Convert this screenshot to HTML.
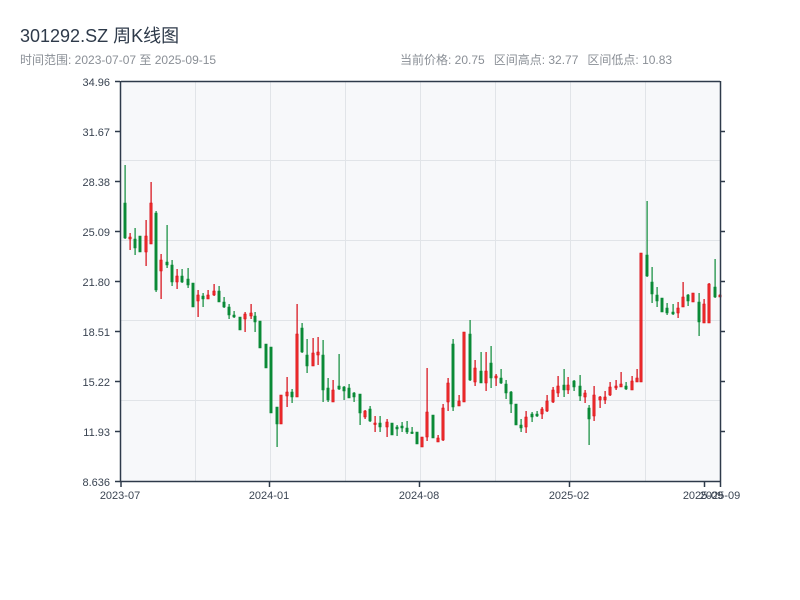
<!DOCTYPE html>
<html><head><meta charset="utf-8"><style>
body{margin:0;width:800px;height:600px;background:#fff;font-family:"Liberation Sans","Noto Sans CJK SC",sans-serif;overflow:hidden;position:relative}
.t{position:absolute;left:20px;top:22px;font-size:18px;color:#2e3a4a}
.s{position:absolute;top:51px;font-size:12px;color:#8a8f96;white-space:nowrap}
.s span{margin-left:9px}
svg{position:absolute;left:0;top:0}
</style></head><body>
<div class="t">301292.SZ 周K线图</div>
<div class="s" style="left:20px">时间范围: 2023-07-07 至 2025-09-15</div>
<div class="s" style="left:400px">当前价格: 20.75<span>区间高点: 32.77</span><span>区间低点: 10.83</span></div>
<svg width="800" height="600" id="c" xmlns="http://www.w3.org/2000/svg" font-family="Liberation Sans, sans-serif" font-size="11" fill="#3a4452">
<rect x="121" y="81" width="599" height="400" fill="#f7f8fa"/>
<g stroke="#e1e4e8" stroke-width="1">
<path d="M195.5 81V481M270.5 81V481M345.5 81V481M420.5 81V481M495.5 81V481M570.5 81V481M645.5 81V481"/>
<path d="M121 160.5H720M121 240.5H720M121 320.5H720M121 400.5H720"/>
</g>
<g id="k"></g>
<g stroke="#2e3a4a" stroke-width="1.5" fill="none">
<path d="M120.5 81V481.5H721M121 81.5H720M720.5 81V481"/>
<path d="M115 81.5H120M115 131.5H120M115 181.5H120M115 231.5H120M115 281.5H120M115 331.5H120M115 381.5H120M115 431.5H120M115 481.5H120"/>
<path d="M720 131.5H725M720 181.5H725M720 231.5H725M720 281.5H725M720 331.5H725M720 381.5H725M720 431.5H725"/>
<path d="M121 481V487M269.5 481V487M419.5 481V487M569.5 481V487M704.5 481V487M720.5 481V487"/>
</g>
<g text-anchor="end">
<text x="110" y="86">34.96</text><text x="110" y="136">31.67</text><text x="110" y="186">28.38</text><text x="110" y="236">25.09</text><text x="110" y="286">21.80</text><text x="110" y="336">18.51</text><text x="110" y="386">15.22</text><text x="110" y="436">11.93</text><text x="110" y="486">8.636</text>
</g>
<g text-anchor="middle">
<text x="120" y="499">2023-07</text><text x="269" y="499">2024-01</text><text x="419" y="499">2024-08</text><text x="569" y="499">2025-02</text><text x="703" y="499">2025-09</text><text x="720" y="499">2025-09</text>
</g>
</svg>
<script>
var d=[
[125,165,239,203,238,'g'],[130,233,250,237,239,'r'],[135,228,255,239,248,'g'],[140,236,252,236,252,'g'],[146,220,266,236,252,'r'],[151,182,244,203,244,'r'],[156,211,292,213,290,'g'],[161,254,299,260,271,'r'],[167,225,268,262,265,'g'],[172,260,286,265,282,'g'],[177,269,289,276,282,'r'],[182,269,283,276,282,'g'],[188,268,288,279,285,'g'],[193,283,307,283,307,'g'],[198,290,317,295,301,'r'],[203,293,307,296,299,'g'],[208,290,299,295,299,'r'],[214,284,296,291,295,'r'],[219,286,302,291,302,'g'],[224,297,308,302,307,'g'],[229,304,319,307,315,'g'],[234,311,318,315,317,'g'],[240,317,330,317,330,'g'],[245,312,332,314,319,'r'],[251,304,319,313,316,'r'],[255,312,332,316,322,'g'],[260,321,348,321,348,'g'],[266,344,368,344,368,'g'],[271,347,413,347,413,'g'],[277,407,447,407,424,'g'],[281,395,424,395,424,'r'],[287,377,407,392,396,'r'],[292,389,403,392,397,'g'],[297,304,397,334,397,'r'],[302,323,353,328,352,'g'],[307,339,373,355,366,'g'],[313,338,366,353,366,'r'],[318,337,365,352,355,'r'],[323,340,402,355,390,'g'],[328,378,402,388,400,'g'],[333,380,402,390,402,'r'],[339,354,390,386,389,'g'],[344,386,400,387,391,'g'],[349,384,398,388,398,'g'],[354,392,402,393,397,'g'],[360,394,425,394,413,'g'],[365,410,419,411,417,'r'],[370,406,422,409,421,'g'],[375,416,432,423,424,'r'],[380,416,432,423,427,'g'],[387,419,437,422,427,'r'],[392,423,435,423,435,'g'],[397,425,436,427,429,'g'],[402,422,432,426,428,'g'],[407,421,434,428,432,'g'],[412,427,434,432,433,'g'],[417,432,444,432,444,'g'],[422,437,447,437,447,'r'],[427,368,441,412,437,'r'],[433,415,438,415,438,'g'],[438,435,442,438,442,'r'],[443,404,441,408,440,'r'],[448,378,411,383,402,'r'],[453,339,411,344,407,'g'],[459,395,406,401,406,'r'],[464,332,402,332,402,'r'],[470,320,381,334,380,'g'],[475,360,386,368,382,'r'],[481,352,383,371,383,'g'],[486,352,391,371,383,'r'],[491,346,388,363,378,'g'],[496,374,386,376,378,'r'],[501,369,384,378,383,'g'],[506,380,399,384,393,'g'],[511,391,413,392,404,'g'],[516,404,425,404,425,'g'],[521,419,432,425,428,'g'],[526,411,433,417,427,'r'],[532,412,422,414,417,'g'],[537,411,417,414,416,'g'],[542,407,419,409,414,'r'],[547,395,412,401,411,'r'],[553,387,403,390,402,'r'],[558,376,397,386,393,'r'],[564,369,397,385,390,'g'],[568,377,394,385,390,'r'],[574,380,391,381,387,'g'],[580,375,401,386,396,'g'],[585,390,403,393,397,'r'],[589,405,445,408,419,'g'],[594,386,421,395,416,'r'],[600,396,408,397,400,'r'],[605,391,404,397,400,'r'],[610,382,396,387,395,'r'],[616,380,390,386,388,'r'],[621,372,387,384,387,'r'],[626,382,390,386,389,'g'],[632,376,390,381,390,'r'],[637,369,382,378,382,'r'],[641,253,382,253,382,'r'],[647,201,277,255,276,'g'],[652,267,303,282,294,'g'],[657,287,307,295,301,'g'],[662,298,312,298,312,'g'],[667,303,315,308,313,'g'],[673,304,315,312,314,'g'],[678,302,318,308,313,'r'],[683,282,307,297,307,'r'],[688,294,306,295,301,'g'],[693,293,302,293,302,'r'],[699,293,336,302,322,'g'],[704,299,323,304,323,'r'],[709,283,323,284,323,'r'],[715,259,298,287,297,'g'],[720,294,297,295,297,'r']];
var s='';d.forEach(function(c){var col=c[5]=='g'?'#0b8a37':'#d7060f';var f=c[5]=='g'?'#0b8a37':'#ec2b2b';
s+='<rect x="'+(c[0]-0.5)+'" y="'+c[1]+'" width="1.2" height="'+(c[2]-c[1])+'" fill="'+col+'"/>';
s+='<rect x="'+(c[0]-1.2)+'" y="'+c[3]+'" width="2.4" height="'+Math.max(1.5,c[4]-c[3])+'" fill="'+f+'" stroke="'+col+'" stroke-width="0.5"/>';});
document.getElementById('k').innerHTML=s;
</script>
</body></html>
